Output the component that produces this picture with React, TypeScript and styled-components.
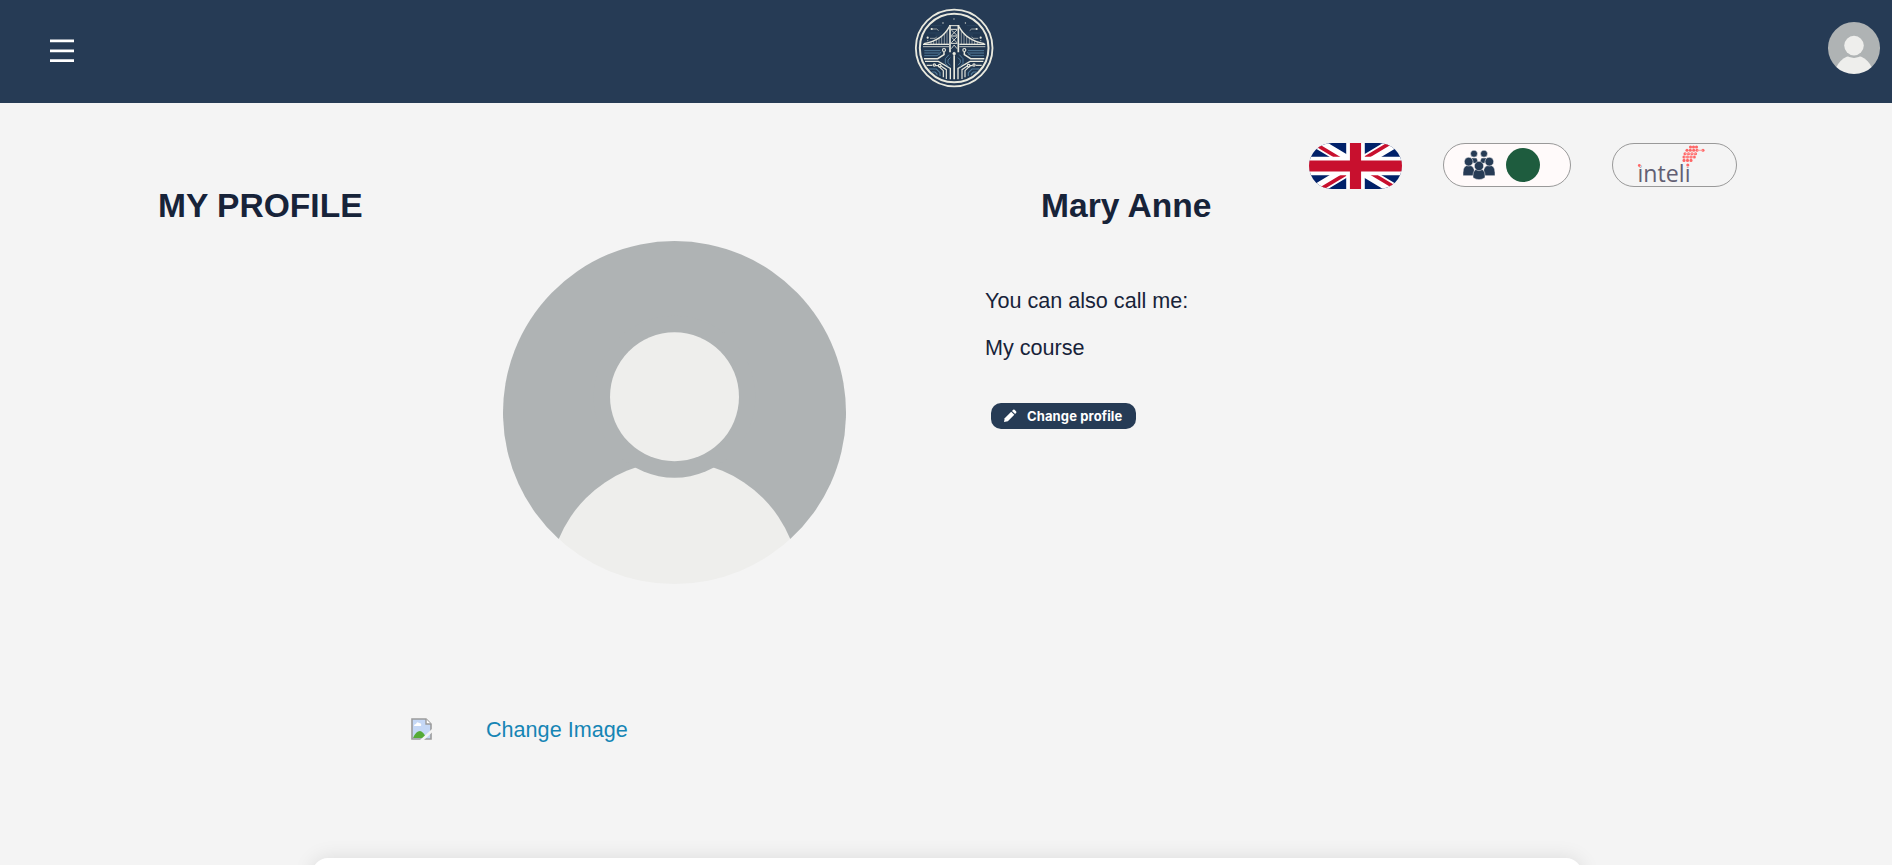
import React from "react";
import styled, { createGlobalStyle } from "styled-components";

const navy = "#263b55";
const ink = "#172339";
const cream = "#e9e9de";
const steel = "#527c9b";

const GlobalStyle = createGlobalStyle`
  *, *::before, *::after { box-sizing: border-box; }
  html, body, #root { height: 100%; }
  body {
    margin: 0;
    overflow: hidden;
    background: #f4f4f4;
    color: ${ink};
    font-family: "Liberation Sans", Arial, sans-serif;
  }
`;

const Page = styled.div`
  display: flex;
  flex-direction: column;
  height: 100%;
`;

const Header = styled.header`
  display: grid;
  grid-template-columns: 1fr 80px 1fr;
  flex: none;
  height: 103px;
  padding: 8px 12px 0 50px;
  background: ${navy};
`;

const MenuButton = styled.button`
  display: flex;
  align-self: start;
  justify-self: start;
  margin-top: 31px;
  padding: 0;
  border: 0;
  background: none;
`;

const LogoSlot = styled.div`
  display: flex;
  margin-left: -11px;
`;

const AccountSlot = styled.div`
  display: flex;
  justify-content: flex-end;
  align-items: flex-start;
  padding-top: 14px;
`;

const Main = styled.main`
  display: flex;
  flex: none;
  height: 755px;
`;

const PhotoColumn = styled.section`
  display: flex;
  flex-direction: column;
  width: 985px;
`;

const Heading = styled.h1<{ $indent: number }>`
  margin: 82px 0 0 ${(p) => p.$indent}px;
  font-size: 33.6px;
  line-height: 42px;
  font-weight: 700;
  white-space: nowrap;
`;

const PhotoSlot = styled.div`
  display: flex;
  margin: 14px 0 0 502.5px;
`;

const ChangeImage = styled.a`
  display: flex;
  align-items: center;
  gap: 54px;
  margin: 130px 0 0 411px;
  color: #1585b5;
  font-size: 21.6px;
  line-height: 32px;
`;

const InfoColumn = styled.section`
  display: flex;
  flex-direction: column;
  align-items: flex-start;
  width: 324px;
`;

const InfoLine = styled.p<{ $top: number }>`
  margin: ${(p) => p.$top}px 0 0;
  font-size: 21.6px;
  line-height: 26px;
  white-space: nowrap;
`;

const EditButton = styled.button`
  display: flex;
  align-items: center;
  gap: 10px;
  width: 145px;
  height: 26px;
  margin: 42px 0 0 6px;
  padding: 0 0 0 12px;
  border: 0;
  border-radius: 10px;
  background: ${navy};
  color: #fff;
  font: 700 13px/27px Inter, sans-serif;
  letter-spacing: 0.12px;
  white-space: nowrap;
`;

const Badges = styled.section`
  display: flex;
  align-items: flex-start;
  padding-top: 40px;
`;

const FlagBadge = styled.div`
  display: flex;
  width: 93px;
  height: 46px;
  border-radius: 25px;
  overflow: hidden;
`;

const Pill = styled.div<{ $width: number; $gap: number; $fill?: string }>`
  display: flex;
  width: ${(p) => p.$width}px;
  height: 44px;
  margin-left: ${(p) => p.$gap}px;
  border: 1px solid #999;
  border-radius: 22px;
  background: ${(p) => p.$fill ?? "transparent"};
`;

const TeamContent = styled.div`
  display: flex;
  align-items: center;
  gap: 11px;
  padding-left: 19px;
  padding-bottom: 1px;
`;

const StatusDot = styled.span`
  width: 34px;
  height: 34px;
  border-radius: 50%;
  background: #1e5c3e;
`;

const InteliMark = styled.svg`
  overflow: visible;
`;

const CardWindow = styled.div`
  display: flex;
  flex: 1;
  min-height: 0;
  margin-top: -40px;
  padding-top: 40px;
  overflow: hidden;
  pointer-events: none;
`;

const CardSurface = styled.section`
  flex: none;
  width: 1270px;
  height: 60px;
  margin-left: 312px;
  border-radius: 16px 16px 0 0;
  background: #fff;
  box-shadow: 0 0 20px rgba(0, 0, 0, 0.1);
`;

function Avatar({ size }: { size: number }) {
  return (
    <svg width={size} height={size} viewBox="0 0 342 342">
      <defs>
        <clipPath id={`face-${size}`}>
          <circle cx="171" cy="171" r="171" />
        </clipPath>
      </defs>
      <path d="M55.300 297A171 171 0 1 1 286.700 297Z" fill="#afb3b4" />
      <circle
        cx="171"
        cy="344.4"
        r="124.7"
        fill="#eeeeec"
        clipPath={`url(#face-${size})`}
      />
      <circle cx="171" cy="155.3" r="80.7" fill="#afb3b4" />
      <circle cx="171" cy="155.3" r="64.3" fill="#eeeeec" />
    </svg>
  );
}

function LogoHalf() {
  return (
    <g fill="none" stroke={cream} strokeWidth="3.500">
      <path d="M133 80Q112 121 57 131" strokeWidth="4" />
      <path
        d="M78 126v7M86 123v10M94 119v14M102 114v18M110 108v24M118 101v31M126 92v40"
        strokeWidth="2"
        opacity=".8"
      />
      <path d="M54 133H132" strokeWidth="4" />
      <path d="M54 140H132" strokeWidth="3" opacity=".75" />
      <path d="M81 87H95L101 92M75 115H91L95 110M66 122H70" strokeWidth="2.500" opacity=".7" />
      <circle cx="80" cy="87" r="1.5" />
      <circle cx="68" cy="113" r="1.5" />
      <circle cx="114" cy="69" r="1.2" strokeWidth="2" />
      <path d="M57 176H98L117 164V155" strokeWidth="4.500" />
      <circle cx="117" cy="150" r="4.5" />
      <path d="M60 184H100L136 205V238" strokeWidth="4" />
      <circle cx="104" cy="197" r="4" />
      <path d="M108 198L124 209V237" />
      <circle cx="88" cy="195" r="3.5" />
      <path d="M92 197H99L115 212V232" />
      <path d="M65 196H82" />
      <g stroke={steel}>
        <path d="M58 152H106M58 159H104L109 156M58 167H96L106 161" strokeWidth="3" />
        <path d="M132 164L121 176V190L132 202M136 173L129 180V188L136 196" strokeWidth="3" />
        <path d="M72 207H94L105 218V228M80 216H90L96 222V226" />
        <path d="M78 77H110M70 99H112M91 105H112" strokeWidth="1" opacity=".6" />
      </g>
    </g>
  );
}

function Logo() {
  return (
    <svg width="80" height="80" viewBox="27 24 240 240">
      <circle cx="147.5" cy="144" r="115" fill="none" stroke={cream} strokeWidth="5.500" />
      <circle cx="147.5" cy="144" r="103" fill="#213750" stroke={cream} strokeWidth="6" />
      <LogoHalf />
      <g transform="translate(295 0) scale(-1 1)">
        <LogoHalf />
      </g>
      <rect x="134" y="76" width="27" height="76" fill="#213750" />
      <g fill="none" stroke={cream}>
        <path d="M135 75V157M160 75V157" strokeWidth="5" />
        <path d="M132 77H163M138 88H157M138 108H157M138 130H157" strokeWidth="3" />
        <path
          d="M139 90L156 106M156 90L139 106M139 111L156 128M156 111L139 128M139 146L147.500 135L156 146"
          strokeWidth="2.5"
        />
        <path d="M147.500 166V238" strokeWidth="5" />
        <circle cx="147.500" cy="161" r="4" fill={cream} strokeWidth="2" />
      </g>
      <path d="M147 54l1 2 2 1-2 1-1 2-1-2-2-1 2-1z" fill={cream} />
    </svg>
  );
}

function MenuIcon() {
  return (
    <svg width="24" height="24" viewBox="0 0 24 24" fill="#fff">
      <path d="M0 .4H24V3.200H0zM0 10.400H24V13.200H0zM0 20.200H24V23H0z" />
    </svg>
  );
}

function UnionFlag() {
  return (
    <svg width="93" height="46" viewBox="0 0 50 30" preserveAspectRatio="xMidYMid slice">
      <clipPath id="saltire">
        <path d="M25 15h25v15zv15h-25zh-25v-15zv-15h25z" />
      </clipPath>
      <rect width="50" height="30" fill="#012169" />
      <path d="M0 0L50 30M50 0L0 30" stroke="#fff" strokeWidth="6" />
      <path d="M0 0L50 30M50 0L0 30" stroke="#c8102e" strokeWidth="4" clipPath="url(#saltire)" />
      <path d="M25 0V30M0 15H50" stroke="#fff" strokeWidth="10" />
      <path d="M25 0V30M0 15H50" stroke="#c8102e" strokeWidth="6" />
    </svg>
  );
}

function TeamIcon() {
  return (
    <svg width="32" height="30" viewBox="0 0 96 90">
      <g fill={navy} stroke="#fffafa" strokeWidth="1.500">
        <path d="M25 24H41L47 40H31zM71 24H55L49 40H65z" />
        <circle cx="33" cy="11" r="10.500" />
        <circle cx="63" cy="11" r="10.500" />
        <path d="M0 77V68Q0 46 17 46T35 68V77zM96 77V68Q96 46 79 46T61 68V77z" />
        <circle cx="17" cy="35" r="13" />
        <circle cx="79" cy="35" r="13" />
        <path d="M30 83V77Q30 56 48 56T66 77V83Q57 89 48 89T30 83z" />
        <circle cx="48" cy="48" r="14" />
      </g>
    </svg>
  );
}

const petalRows: [number, number[]][] = [
  [3, [77.5, 80.5, 83.5]],
  [6.3, [74, 77.3, 80.7, 84, 90]],
  [9.7, [72, 75.5, 79, 82.5]],
  [13, [71, 74.5, 78, 81.3]],
  [16.4, [71, 74.5, 78]],
  [21, [74.8]],
];

function InteliLogo() {
  return (
    <InteliMark width="123" height="42" viewBox="0 0 123 42">
      <text
        x="24.500"
        y="38"
        fontFamily="'Open Sans', sans-serif"
        fontWeight="400"
        fontSize="23.500"
        textLength="53"
        lengthAdjust="spacingAndGlyphs"
        fill="#625f73"
      >
        inteli
      </text>
      <rect x="24.500" y="18" width="4" height="5" fill="#f4f4f4" />
      <rect x="72.500" y="18" width="4.500" height="5" fill="#f4f4f4" />
      <g fill="#ff6666">
        <circle cx="26.300" cy="21.500" r="1.400" />
        {petalRows.map(([y, xs]) =>
          xs.map((x) => <circle key={`${x}-${y}`} cx={x} cy={y} r="1.550" />),
        )}
      </g>
      <path d="M84 6.300H90M72 9.700H83M71 13H81" stroke="#ff9a9a" strokeWidth="1" />
    </InteliMark>
  );
}

function PencilIcon() {
  return (
    <svg width="14" height="15" viewBox="0 0 14 15" fill="#fff">
      <path d="M1 13L1.700 9.200L8.200 2.700L11.300 5.800L4.800 12.300Z" />
      <path d="M9 1.900L10.200.7Q10.900.2 11.600.8L13.200 2.400Q13.700 3 13.200 3.800L12.100 5Z" />
    </svg>
  );
}

function MissingPictureIcon() {
  return (
    <svg width="21" height="24" viewBox="0 0 21 24">
      <path d="M1 1H15L20 6V21H1Z" fill="#c5d8f6" stroke="#9b9b9b" strokeWidth="1.600" />
      <path d="M3 8Q3 6 5 6Q6 3 8 5Q11 5 10 8Z" fill="#fff" />
      <path d="M2 20Q5 13 9 13Q13 14 15 20Z" fill="#55ab36" />
      <path d="M15 1V6H20" fill="#fff" stroke="#9b9b9b" strokeWidth="1.400" />
      <path d="M9 22L21 11V14.500L13 22Z" fill="#f4f4f4" />
    </svg>
  );
}

export default function App() {
  return (
    <Page>
      <GlobalStyle />
      <Header>
        <MenuButton aria-label="Menu">
          <MenuIcon />
        </MenuButton>
        <LogoSlot>
          <Logo />
        </LogoSlot>
        <AccountSlot>
          <Avatar size={52} />
        </AccountSlot>
      </Header>
      <Main>
        <PhotoColumn>
          <Heading $indent={158}>MY PROFILE</Heading>
          <PhotoSlot>
            <Avatar size={343} />
          </PhotoSlot>
          <ChangeImage>
            <MissingPictureIcon />
            Change Image
          </ChangeImage>
        </PhotoColumn>
        <InfoColumn>
          <Heading $indent={56}>Mary Anne</Heading>
          <InfoLine $top={61}>You can also call me:</InfoLine>
          <InfoLine $top={21}>My course</InfoLine>
          <EditButton>
            <PencilIcon />
            Change profile
          </EditButton>
        </InfoColumn>
        <Badges>
          <FlagBadge>
            <UnionFlag />
          </FlagBadge>
          <Pill $width={128} $gap={41} $fill="#fffafa">
            <TeamContent>
              <TeamIcon />
              <StatusDot />
            </TeamContent>
          </Pill>
          <Pill $width={125} $gap={41}>
            <InteliLogo />
          </Pill>
        </Badges>
      </Main>
      <CardWindow>
        <CardSurface />
      </CardWindow>
    </Page>
  );
}
